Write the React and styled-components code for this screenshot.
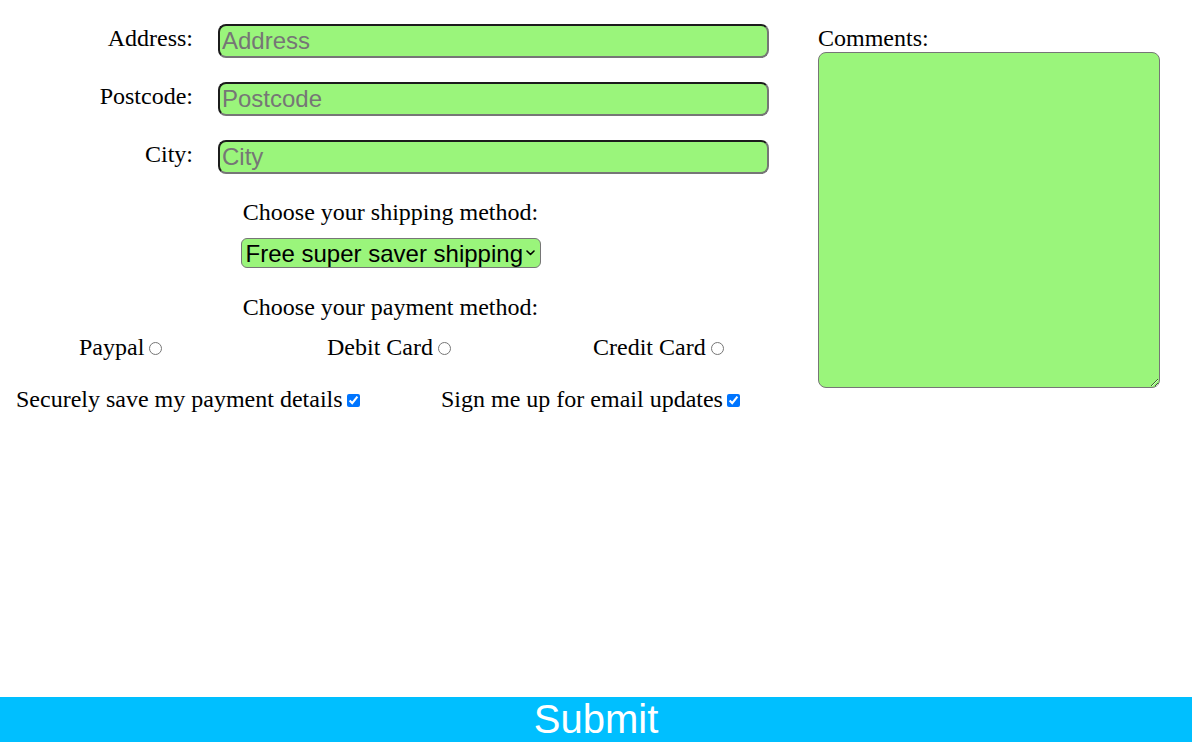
import React from 'react'
import styled, { createGlobalStyle } from 'styled-components'

const GlobalStyle = createGlobalStyle`
  html, body {
    margin: 0;
    padding: 0;
    background: #fff;
  }
  body {
    font-family: "Liberation Serif", "Times New Roman", serif;
    color: #000;
  }
`

const green = '#9af57b'

const Page = styled.form`
  min-height: 100vh;
  display: flex;
  flex-direction: column;
  box-sizing: border-box;
`

const Main = styled.div`
  display: flex;
  align-items: flex-start;
  padding-top: 24px;
  column-gap: 37px;
`

const LeftColumn = styled.div`
  width: 781px;
  display: flex;
  flex-direction: column;
`

const Fields = styled.div`
  display: grid;
  grid-template-columns: 193px 551px;
  column-gap: 25px;
  row-gap: 24px;
`

const FieldLabel = styled.label`
  font-size: 24px;
  text-align: right;
  line-height: normal;
  padding-top: 1px;
`

const TextInput = styled.input`
  box-sizing: border-box;
  width: 551px;
  height: 34px;
  padding: 1px 2px;
  border: 2px solid;
  border-color: #1c1c1c #767676 #767676 #1c1c1c;
  border-radius: 8px;
  background: ${green};
  font-family: "Liberation Sans", Arial, sans-serif;
  font-size: 24px;
  outline: none;
  &::placeholder {
    color: #767676;
  }
`

const Centered = styled.div`
  text-align: center;
  margin-top: ${p => p.$top}px;
  font-size: 24px;
  line-height: 27px;
`

const SelectWrap = styled.div`
  position: relative;
  align-self: center;
  margin-top: 12px;
  width: 300px;
`

const Select = styled.select`
  appearance: none;
  box-sizing: border-box;
  width: 300px;
  height: 30px;
  padding: 0 18px 0 4px;
  border: 1px solid #767676;
  border-radius: 6px;
  background: ${green};
  color: #000;
  font-family: "Liberation Sans", Arial, sans-serif;
  font-size: 24px;
  outline: none;
`

const Chevron = styled.svg`
  position: absolute;
  right: 6px;
  top: 12px;
  pointer-events: none;
`

const RadioRow = styled.div`
  display: grid;
  grid-template-columns: 248px 266px auto;
  padding-left: 79px;
  margin-top: 13px;
  font-size: 24px;
  line-height: 27px;
`

const CheckRow = styled.div`
  display: grid;
  grid-template-columns: 425px auto;
  padding-left: 16px;
  margin-top: 25px;
  font-size: 24px;
  line-height: 27px;
`

const Option = styled.label`
  white-space: nowrap;
`

const RightColumn = styled.div`
  display: flex;
  flex-direction: column;
`

const CommentsLabel = styled.label`
  font-size: 24px;
  line-height: 28px;
`

const Comments = styled.textarea`
  box-sizing: border-box;
  width: 342px;
  height: 336px;
  border: 1px solid #767676;
  border-radius: 8px;
  background: ${green};
  outline: none;
  font-family: "Liberation Sans", Arial, sans-serif;
`

const SubmitBar = styled.button`
  margin-top: auto;
  width: 100%;
  height: 45px;
  border: none;
  padding: 0;
  background: #00bfff;
  color: #fff;
  font-family: "Liberation Sans", Arial, sans-serif;
  font-size: 40px;
  line-height: 45px;
  cursor: pointer;
`

const fields = ['Address', 'Postcode', 'City']

export default function App() {
  return (
    <>
      <GlobalStyle />
      <Page onSubmit={e => e.preventDefault()}>
        <Main>
          <LeftColumn>
            <Fields>
              {fields.map(name => (
                <React.Fragment key={name}>
                  <FieldLabel htmlFor={name}>{name}:</FieldLabel>
                  <TextInput id={name} placeholder={name} />
                </React.Fragment>
              ))}
            </Fields>

            <Centered $top={25}>Choose your shipping method:</Centered>
            <SelectWrap>
              <Select defaultValue="free">
                <option value="free">Free super saver shipping</option>
                <option value="standard">Standard shipping</option>
                <option value="express">Express shipping</option>
              </Select>
              <Chevron width="9" height="6" viewBox="0 0 9 6">
                <path d="M1 1l3.5 3.5L8 1" fill="none" stroke="#000" strokeWidth="1.6" strokeLinecap="round" strokeLinejoin="round" />
              </Chevron>
            </SelectWrap>

            <Centered $top={26}>Choose your payment method:</Centered>
            <RadioRow>
              <Option>Paypal<input type="radio" name="payment" /></Option>
              <Option>Debit Card<input type="radio" name="payment" /></Option>
              <Option>Credit Card<input type="radio" name="payment" /></Option>
            </RadioRow>

            <CheckRow>
              <Option>Securely save my payment details<input type="checkbox" defaultChecked /></Option>
              <Option>Sign me up for email updates<input type="checkbox" defaultChecked /></Option>
            </CheckRow>
          </LeftColumn>

          <RightColumn>
            <CommentsLabel htmlFor="comments">Comments:</CommentsLabel>
            <Comments id="comments" />
          </RightColumn>
        </Main>
        <SubmitBar type="submit">Submit</SubmitBar>
      </Page>
    </>
  )
}
